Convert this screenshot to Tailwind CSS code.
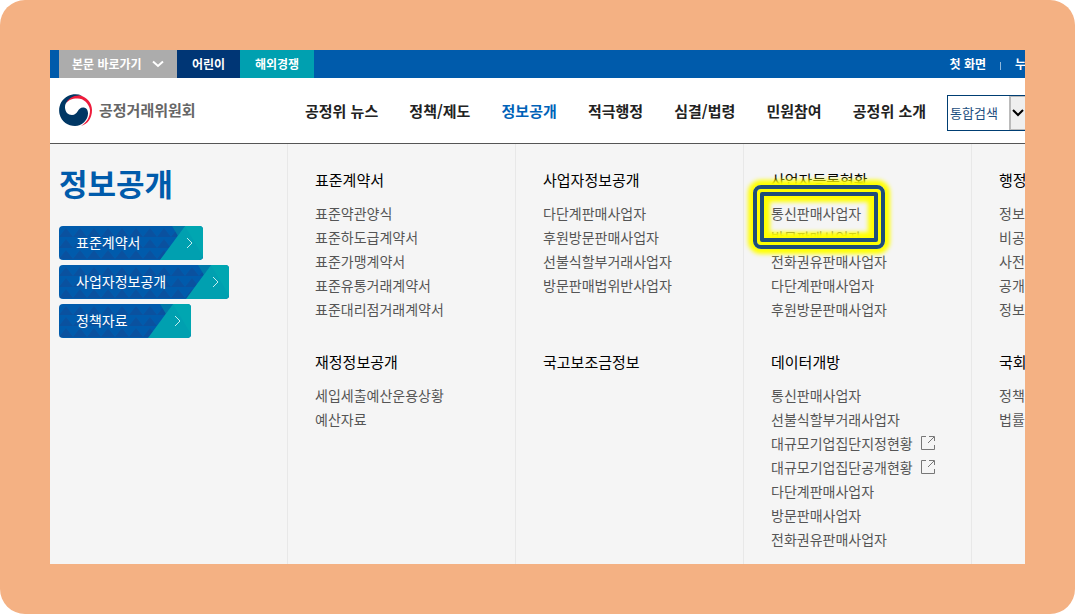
<!DOCTYPE html>
<html lang="ko">
<head>
  <meta charset="UTF-8" />
  <meta name="viewport" content="width=device-width, initial-scale=1.0" />
  <title>공정거래위원회 - 정보공개</title>
  <script src="https://cdn.jsdelivr.net/npm/@tailwindcss/browser@4"></script>
</head>
<body class="bg-white font-['Noto_Sans_CJK_KR',sans-serif]">
  <!-- shared shapes -->
  <svg class="absolute size-0" aria-hidden="true">
    <defs>
      <pattern id="tri" width="14" height="11" patternUnits="userSpaceOnUse">
        <path d="M0 11L7 2L14 11Z" fill="#0a519f" />
      </pattern>
      <symbol id="corner" viewBox="0 0 46 34">
        <path d="M15 0H28L21 10Z" fill="#0079a8" />
        <path d="M28 0H46V34H3Z" fill="#00a0b0" />
        <path d="M28 0H46V30Z" fill="#00a6b1" />
        <path d="M30 12L35 17L30 22" fill="none" stroke="#c5ecee" />
      </symbol>
      <symbol id="external" viewBox="0 0 14 14">
        <path d="M5 .5H.5V13.5H13.5V9M8 .5H13.5V5M13 1L7 7" fill="none" stroke="#777" />
      </symbol>
    </defs>
  </svg>

  <div class="min-h-screen rounded-[25px] bg-[#f4b183] p-[50px]">
    <div class="overflow-hidden bg-[#f5f5f5]">

      <!-- top bar -->
      <div class="flex h-7 items-stretch bg-[#005bab] pl-[9px] text-xs font-bold whitespace-nowrap text-white">
        <button type="button" class="flex w-[118px] items-center gap-[10px] bg-[#acacac] pl-[13px]">
          본문 바로가기
          <svg class="h-2 w-3" viewBox="0 0 12 8" fill="none" stroke="currentColor" stroke-width="2"><path d="M1 1.500L6 6L11 1.500" /></svg>
        </button>
        <a href="#" class="flex w-[63px] items-center justify-center bg-[#003675]">어린이</a>
        <a href="#" class="flex w-[74px] items-center justify-center bg-[#00a0b0]">해외경쟁</a>
        <div class="ml-auto flex items-center">
          <a href="#">첫 화면</a>
          <span class="mx-[14px] mt-1 h-2 w-px bg-[#8fb8dc]"></span>
          <a href="#" class="w-[10px] overflow-hidden">누</a>
        </div>
      </div>

      <!-- header -->
      <header class="flex h-[66px] items-center border-b border-[#555] bg-white pl-[9px] whitespace-nowrap">
        <a href="#" class="flex w-[246px] shrink-0 items-center gap-[7px] text-[15px] font-bold text-[#666]">
          <svg class="size-[33px]" viewBox="0 0 33 33">
            <path fill="#003764" d="M23 1.500C18-.5 13 0 9 2C2 5.500-1 13 .5 20C2.500 28 9 32 16 32C23 32 29 26 29 19.500C29 15.500 27 13.500 24 13.500C18.500 13.500 19 21 13 21C9 21 6 18 6 13C6 8 11 2.500 23 1.500Z" />
            <path fill="#ee1c3c" d="M7 10C9 4 15 1 21 1.500C28 3 33 9 33 16C33 24 29 30 22 32C28 28 31 23 31 16C30 9 24 4 18 4.500C13 4.500 9 6 7 10Z" />
          </svg>
          공정거래위원회
        </a>
        <nav class="flex grow justify-between pt-px pr-[21px] text-[15px] font-bold text-[#222]">
          <a href="#">공정위 뉴스</a>
          <a href="#">정책/제도</a>
          <a href="#" class="text-[#0062b8]">정보공개</a>
          <a href="#">적극행정</a>
          <a href="#">심결/법령</a>
          <a href="#">민원참여</a>
          <a href="#">공정위 소개</a>
        </nav>
        <div class="relative mt-1 h-9 w-[78px] shrink-0 border border-r-0 border-[#003e73]">
          <select aria-label="검색 범위" class="h-full w-full appearance-none pl-[2px] text-[13px] text-[#1c4e80]">
            <option>통합검색</option>
          </select>
          <span class="pointer-events-none absolute inset-y-0 right-0 flex w-4 items-center justify-center border border-r-0 border-l-2 border-[#bbb] bg-[#efefef]">
            <svg class="h-2 w-3 shrink-0" viewBox="0 0 12 8" fill="none" stroke="#000" stroke-width="2"><path d="M1 1L6 6L11 1" /></svg>
          </span>
        </div>
      </header>

      <!-- mega menu -->
      <div class="grid grid-cols-[237px_repeat(3,228px)_minmax(0,1fr)] text-sm/6 whitespace-nowrap text-[#555]">
        <div class="pt-[17px] pl-[9px]">
          <h1 class="text-[31px]/11 font-bold text-[#005bab]">정보공개</h1>
          <div class="mt-[21px] flex flex-col items-start gap-[5px] text-sm text-white">
            <a href="#" class="relative flex h-[34px] items-center overflow-hidden rounded bg-[#005bac] pr-[63px] pb-[2px] pl-[17px]">
              <svg class="absolute inset-0 size-full"><rect width="100%" height="100%" fill="url(#tri)" /></svg>
              <svg class="absolute top-0 right-0 h-[34px] w-[46px]"><use href="#corner" /></svg>
              <span class="relative">표준계약서</span>
            </a>
            <a href="#" class="relative flex h-[34px] items-center overflow-hidden rounded bg-[#005bac] pr-[63px] pb-[2px] pl-[17px]">
              <svg class="absolute inset-0 size-full"><rect width="100%" height="100%" fill="url(#tri)" /></svg>
              <svg class="absolute top-0 right-0 h-[34px] w-[46px]"><use href="#corner" /></svg>
              <span class="relative">사업자정보공개</span>
            </a>
            <a href="#" class="relative flex h-[34px] items-center overflow-hidden rounded bg-[#005bac] pr-[63px] pb-[2px] pl-[17px]">
              <svg class="absolute inset-0 size-full"><rect width="100%" height="100%" fill="url(#tri)" /></svg>
              <svg class="absolute top-0 right-0 h-[34px] w-[46px]"><use href="#corner" /></svg>
              <span class="relative">정책자료</span>
            </a>
          </div>
        </div>

        <div class="border-l border-[#e8e8e8] pt-6 pb-[14px] pl-[27px]">
          <h2 class="mb-[9px] text-[15px]/6 text-black">표준계약서</h2>
          <ul class="mb-[29px] min-h-30">
            <li><a href="#">표준약관양식</a></li>
            <li><a href="#">표준하도급계약서</a></li>
            <li><a href="#">표준가맹계약서</a></li>
            <li><a href="#">표준유통거래계약서</a></li>
            <li><a href="#">표준대리점거래계약서</a></li>
          </ul>
          <h2 class="mb-[9px] text-[15px]/6 text-black">재정정보공개</h2>
          <ul>
            <li><a href="#">세입세출예산운용상황</a></li>
            <li><a href="#">예산자료</a></li>
          </ul>
        </div>

        <div class="border-l border-[#e8e8e8] pt-6 pb-[14px] pl-[27px]">
          <h2 class="mb-[9px] text-[15px]/6 text-black">사업자정보공개</h2>
          <ul class="mb-[29px] min-h-30">
            <li><a href="#">다단계판매사업자</a></li>
            <li><a href="#">후원방문판매사업자</a></li>
            <li><a href="#">선불식할부거래사업자</a></li>
            <li><a href="#">방문판매법위반사업자</a></li>
          </ul>
          <h2 class="mb-[9px] text-[15px]/6 text-black">국고보조금정보</h2>
        </div>

        <div class="border-l border-[#e8e8e8] pt-6 pb-[13px] pl-[27px]">
          <h2 class="mb-[9px] text-[15px]/6 text-black">사업자등록현황</h2>
          <ul class="mb-[29px] min-h-30">
            <li class="relative">
              <a href="#">통신판매사업자</a>
              <!-- highlight frame round the link -->
              <div class="pointer-events-none absolute -top-4 -left-[18px] h-16 w-[132px] rounded-lg border-4 border-[#1f4e79] p-[3px] shadow-[0_0_4px_5px_#ff0,inset_0_0_0_6px_#ff0]">
                <div class="h-full rounded-xs border-4 border-[#1f4e79] shadow-[inset_0_0_4px_6px_#ff0]"></div>
              </div>
            </li>
            <li><a href="#">방문판매사업자</a></li>
            <li><a href="#">전화권유판매사업자</a></li>
            <li><a href="#">다단계판매사업자</a></li>
            <li><a href="#">후원방문판매사업자</a></li>
          </ul>
          <h2 class="mb-[9px] text-[15px]/6 text-black">데이터개방</h2>
          <ul>
            <li><a href="#">통신판매사업자</a></li>
            <li><a href="#">선불식할부거래사업자</a></li>
            <li><a href="#" class="flex items-center gap-2">대규모기업집단지정현황 <svg class="size-[14px]"><use href="#external" /></svg></a></li>
            <li><a href="#" class="flex items-center gap-2">대규모기업집단공개현황 <svg class="size-[14px]"><use href="#external" /></svg></a></li>
            <li><a href="#">다단계판매사업자</a></li>
            <li><a href="#">방문판매사업자</a></li>
            <li><a href="#">전화권유판매사업자</a></li>
          </ul>
        </div>

        <div class="overflow-hidden border-l border-[#e8e8e8] pt-6 pb-[14px] pl-[27px]">
          <h2 class="mb-[9px] text-[15px]/6 text-black">행정</h2>
          <ul class="mb-[29px] min-h-30">
            <li><a href="#">정보</a></li>
            <li><a href="#">비공</a></li>
            <li><a href="#">사전</a></li>
            <li><a href="#">공개</a></li>
            <li><a href="#">정보</a></li>
          </ul>
          <h2 class="mb-[9px] text-[15px]/6 text-black">국회</h2>
          <ul>
            <li><a href="#">정책</a></li>
            <li><a href="#">법률</a></li>
          </ul>
        </div>
      </div>
    </div>
  </div>
</body>
</html>
